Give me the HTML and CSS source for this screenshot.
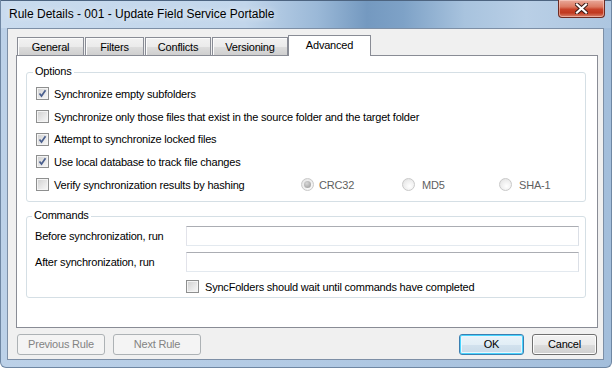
FILE: index.html
```html
<!DOCTYPE html>
<html>
<head>
<meta charset="utf-8">
<link rel="stylesheet" href="styles.css">
</head>
<body>

<div class="window">
  <div class="titlebar">
    <span class="title">Rule Details - 001 - Update Field Service Portable</span>
    <div class="closebtn">
      <svg width="13" height="11" viewBox="0 0 13 11">
        <path d="M2 1.5 L11 9.5 M11 1.5 L2 9.5" stroke="#3a1c18" stroke-width="4.2" stroke-linecap="square"/>
        <path d="M2 1.5 L11 9.5 M11 1.5 L2 9.5" stroke="#ffffff" stroke-width="2.2" stroke-linecap="square"/>
      </svg>
    </div>
  </div>

  <div class="client">
    <div class="tabs">
      <div class="tab tab-general">General</div>
      <div class="tab tab-filters">Filters</div>
      <div class="tab tab-conflicts">Conflicts</div>
      <div class="tab tab-versioning">Versioning</div>
      <div class="tab tab-advanced active">Advanced</div>
    </div>

    <div class="panel">
      <fieldset class="group options">
        <legend>Options</legend>
        <div class="row"><span class="check on"><svg width="13" height="13" viewBox="0 0 13 13"><path d="M3.5 6.5 L5.5 9 L9.5 3.2" fill="none" stroke="#4a5f8e" stroke-width="1.7"/></svg></span>Synchronize empty subfolders</div>
        <div class="row"><span class="check"></span>Synchronize only those files that exist in the source folder and the target folder</div>
        <div class="row short"><span class="check on"><svg width="13" height="13" viewBox="0 0 13 13"><path d="M3.5 6.5 L5.5 9 L9.5 3.2" fill="none" stroke="#4a5f8e" stroke-width="1.7"/></svg></span>Attempt to synchronize locked files</div>
        <div class="row"><span class="check on"><svg width="13" height="13" viewBox="0 0 13 13"><path d="M3.5 6.5 L5.5 9 L9.5 3.2" fill="none" stroke="#4a5f8e" stroke-width="1.7"/></svg></span>Use local database to track file changes</div>
        <div class="row">
          <span class="check"></span><span class="hashlabel">Verify synchronization results by hashing</span>
          <span class="opt opt-crc"><span class="radio sel"></span>CRC32</span>
          <span class="opt opt-md5"><span class="radio"></span>MD5</span>
          <span class="opt"><span class="radio"></span>SHA-1</span>
        </div>
      </fieldset>

      <fieldset class="group commands">
        <legend>Commands</legend>
        <div class="cmdgrid">
          <label>Before synchronization, run</label>
          <div class="textbox"></div>
          <label class="second">After synchronization, run</label>
          <div class="textbox second"></div>
          <div class="waitrow"><span class="check"></span>SyncFolders should wait until commands have completed</div>
        </div>
      </fieldset>
    </div>

    <div class="buttons">
      <div class="btn disabled wide">Previous Rule</div>
      <div class="btn disabled wide">Next Rule</div>
      <div class="spacer"></div>
      <div class="btn default">OK</div>
      <div class="btn">Cancel</div>
    </div>
  </div>
</div>

</body>
</html>
```

FILE: styles.css
```css
body {
    margin: 0;
    font-family: "Liberation Sans", Arial, sans-serif;
    font-size: 11px;
    letter-spacing: -0.2px;
    color: #000;
}

/* Aero window frame */
.window {
    width: 612px;
    height: 368px;
    box-sizing: border-box;
    display: flex;
    flex-direction: column;
    background: linear-gradient(to right, #bcd1e8 0%, #b2cae4 50%, #a3bedb 100%);
    border: 1px solid #6f87a3;
    border-top: none;
    border-radius: 0 0 6px 6px;
}

.titlebar {
    height: 28px;
    display: flex;
    align-items: flex-start;
    background: linear-gradient(to right, #c9dbee 0%, #c2d6eb 40%, #9ab8d7 52%, #7499c0 60%, #7ea2c7 66%, #a8c3de 76%, #b9cfe6 86%, #adc6e0 100%);
    border-top: 1px solid #4d6480;
    box-sizing: border-box;
}

.title {
    flex: 1;
    padding-left: 8px;
    font-size: 12px;
    letter-spacing: 0;
    line-height: 27px;
    color: #000;
    text-shadow: 0 0 6px rgba(255,255,255,0.9);
}

/* The close button (x) */
.closebtn {
    width: 47px;
    height: 18px;
    margin-right: 6px;
    margin-top: -1px;
    box-sizing: border-box;
    border: 1px solid #6e2b22;
    border-top: none;
    border-radius: 0 0 4px 4px;
    background: linear-gradient(to bottom, #e9a99a 0%, #dc7a62 40%, #c8432a 55%, #c0391f 75%, #d9826c 100%);
    box-shadow: inset 0 0 0 1px rgba(255,220,210,0.5);
    display: flex;
    align-items: center;
    justify-content: center;
}

.client {
    flex: 1;
    margin: 0 7px 7px 6px;
    background: #f0f0f0;
    border: 1px solid #7d8fa6;
    display: flex;
    flex-direction: column;
}

/* Tabs */
.tabs {
    display: flex;
    align-items: flex-end;
    height: 20px;
    margin-top: 6px;
    padding-left: 9px;
}

.tab {
    height: 18px;
    box-sizing: border-box;
    border: 1px solid #898c95;
    border-bottom: none;
    margin-right: 1px;
    text-align: center;
    line-height: 18px;
    background: linear-gradient(to bottom, #f2f2f2 0%, #ebebeb 50%, #dddddd 51%, #cfcfcf 100%);
    box-shadow: inset 1px 1px 0 #fcfcfc;
}

.tab-general { width: 67px; }
.tab-filters { width: 59px; }
.tab-conflicts { width: 66px; }
.tab-versioning { width: 76px; margin-right: 0; }

.tab.active {
    width: 83px;
    height: 21px;
    margin-bottom: -1px;
    line-height: 18px;
    background: #fff;
    box-shadow: none;
    position: relative;
    z-index: 1;
}

.panel {
    width: 582px;
    height: 273px;
    box-sizing: border-box;
    margin-left: 8px;
    background: #fff;
    border: 1px solid #898c95;
}

/* Group boxes */
.group {
    margin: 0 0 0 9px;
    width: 560px;
    box-sizing: border-box;
    border: 1px solid #d5dfe5;
    border-radius: 3px;
    min-width: 0;
}

.group legend {
    padding: 1px 2px 3px 2px;
    margin-left: -3px;
    line-height: 13px;
}

.options {
    margin-top: 8px;
    padding: 1px 0 5px 9px;
}

.row {
    height: 23px;
    display: flex;
    align-items: center;
}

.row.short {
    height: 22px;
}

.check {
    width: 13px;
    height: 13px;
    box-sizing: border-box;
    flex: none;
    margin-right: 5px;
    border: 1px solid #8e8f8f;
    background: linear-gradient(135deg, #cfcfcf 0%, #e9e9e9 60%, #f8f8f8 100%);
    box-shadow: inset 0 0 0 1px #f4f4f4;
    position: relative;
}

.check svg {
    position: absolute;
    left: -1px;
    top: -1px;
}

.hashlabel {
    width: 247px;
}

.opt {
    display: flex;
    align-items: center;
    color: #5f5f5f;
}

.opt-crc { width: 101px; }
.opt-md5 { width: 97px; }

.radio {
    width: 13px;
    height: 13px;
    box-sizing: border-box;
    border-radius: 50%;
    border: 1px solid #c9c9c9;
    background: radial-gradient(circle at 60% 65%, #ffffff 0%, #eeeeee 55%, #dcdcdc 100%);
    margin-right: 7px;
    position: relative;
}

.opt-crc .radio {
    margin-right: 5px;
}

.radio.sel::after {
    content: "";
    position: absolute;
    left: 2px;
    top: 2px;
    width: 7px;
    height: 7px;
    border-radius: 50%;
    background: radial-gradient(circle at 40% 35%, #d8d8d8 0%, #a9a9a9 70%, #989898 100%);
}

.commands {
    margin-top: 6px;
    padding: 0 6px 4px 8px;
}

.cmdgrid {
    display: grid;
    grid-template-columns: 151px 1fr;
    align-items: center;
    padding-top: 1px;
}

.cmdgrid .second {
    margin-top: 6px;
}

.textbox {
    height: 20px;
    box-sizing: border-box;
    background: #fff;
    border: 1px solid #e3e9ef;
    border-top-color: #abadb3;
    border-left-color: #e2e3ea;
    border-right-color: #dbdfe6;
}

.waitrow {
    grid-column: 2;
    display: flex;
    align-items: center;
    margin-top: 8px;
    height: 13px;
}

.waitrow .check {
    margin-right: 6px;
}

/* Bottom buttons */
.buttons {
    display: flex;
    margin-top: 6px;
    padding: 0 6px 0 9px;
    gap: 8px;
}

.spacer {
    flex: 1;
}

.btn {
    width: 65px;
    height: 21px;
    box-sizing: border-box;
    border: 1px solid #707070;
    border-radius: 3px;
    text-align: center;
    line-height: 19px;
    background: linear-gradient(to bottom, #f2f2f2 0%, #ebebeb 50%, #dddddd 51%, #cfcfcf 100%);
    box-shadow: inset 0 0 0 1px #fcfcfc;
}

.btn.wide {
    width: 88px;
}

.btn.disabled {
    border-color: #adb2b5;
    background: #f4f4f4;
    color: #838383;
    box-shadow: none;
}

.btn.default {
    border-color: #3c7fb1;
    box-shadow: inset 0 0 0 1px #48d4fe, inset 0 0 0 2px #eaf6fd;
    background: linear-gradient(to bottom, #eaf4fa 0%, #e2eef6 50%, #d2e2ee 51%, #c8dae8 100%);
}
```
